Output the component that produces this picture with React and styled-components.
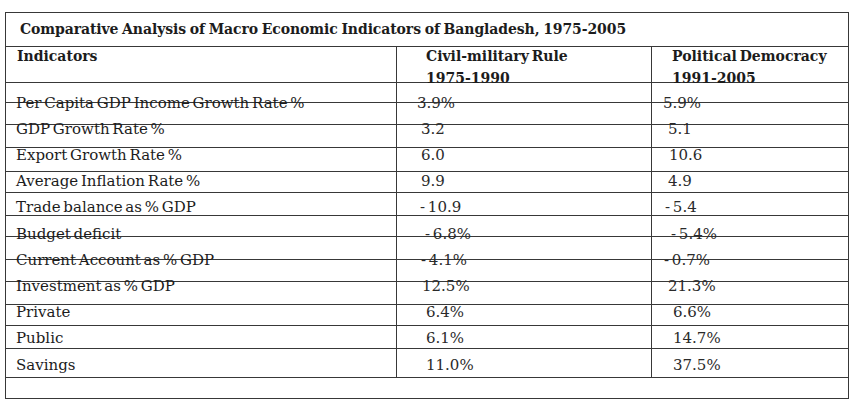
// --------------------------------------------------
//   Import
// --------------------------------------------------

import React from 'react';
import styled, { createGlobalStyle } from 'styled-components';



// --------------------------------------------------
//   Data
// --------------------------------------------------

// line bands of the printed grid (border-box heights, px)
const bandHeights = [20, 22, 23, 24, 21, 23, 21, 23, 22, 23, 21, 23, 29];

const rows = [
  { label: 'Per Capita GDP Income Growth Rate %', a: '3.9%', ai: 20, b: '5.9%', bi: 11 },
  { label: 'GDP Growth Rate %', a: '3.2', ai: 24, b: '5.1', bi: 16 },
  { label: 'Export Growth Rate %', a: '6.0', ai: 24, b: '10.6', bi: 17 },
  { label: 'Average Inflation Rate %', a: '9.9', ai: 24, b: '4.9', bi: 16 },
  { label: 'Trade balance as % GDP', a: '- 10.9', ai: 23, b: '- 5.4', bi: 13 },
  { label: 'Budget deficit', a: '- 6.8%', ai: 28, b: '- 5.4%', bi: 19 },
  { label: 'Current Account as % GDP', a: '- 4.1%', ai: 24, b: '- 0.7%', bi: 12 },
  { label: 'Investment as % GDP', a: '12.5%', ai: 25, b: '21.3%', bi: 16 },
  { label: 'Private', a: '6.4%', ai: 29, b: '6.6%', bi: 21 },
  { label: 'Public', a: '6.1%', ai: 29, b: '14.7%', bi: 21 },
  { label: 'Savings', a: '11.0%', ai: 29, b: '37.5%', bi: 21 },
];



// --------------------------------------------------
//   Styles
// --------------------------------------------------

const GlobalStyle = createGlobalStyle`
  html, body {
    margin: 0;
    padding: 0;
    background: #fff;
  }
`;

const Page = styled.div`
  width: 860px;
  height: 407px;
  padding: 12px 0 0 5px;
  box-sizing: border-box;
  font-family: "DejaVu Serif", serif;
  color: #1c1c1c;
`;

const Sheet = styled.div`
  position: relative;
  width: 844px;
  height: 387px;
  box-sizing: border-box;
  border: 1px solid #383838;
`;

// ---------- printed rules ----------

const Rules = styled.div`
  display: flex;
  flex-direction: column;
`;

const Band = styled.div`
  display: grid;
  grid-template-columns: 391px 255px 1fr;
  height: ${(p) => p.$h}px;
  box-sizing: border-box;
  border-bottom: ${(p) => (p.$last ? 'none' : '1px solid #383838')};
`;

const BandCell = styled.div`
  border-right: ${(p) => (p.$ruled ? '1px solid #383838' : 'none')};
`;

// ---------- text printed over the rules ----------

const TextLayer = styled.div`
  position: absolute;
  inset: 0;
  display: flex;
  flex-direction: column;
`;

const TitleLine = styled.div`
  height: 32px;
  line-height: 32px;
  padding-left: 14px;
  font-size: 14px;
  font-weight: bold;
  letter-spacing: -0.1px;
  word-spacing: -1px;
  white-space: nowrap;
`;

const TextRow = styled.div`
  display: grid;
  grid-template-columns: 391px 255px 1fr;
  height: ${(p) => p.$h}px;
  line-height: ${(p) => p.$h}px;
  font-size: ${(p) => (p.$bold ? 14 : 15)}px;
  font-weight: ${(p) => (p.$bold ? 'bold' : 'normal')};
  word-spacing: -2px;
  white-space: nowrap;
`;

const Cell = styled.div`
  padding-left: ${(p) => p.$indent}px;
`;

const Figure = styled(Cell)`
  font-weight: 300;
  color: #2a2a2a;
`;



// --------------------------------------------------
//   Component
// --------------------------------------------------

export default function App() {
  return (
    <React.Fragment>
      <GlobalStyle />
      <Page>
        <Sheet>
          <Rules>
            <Band $h={34}>
              <BandCell />
            </Band>
            <Band $h={36}>
              <BandCell $ruled />
              <BandCell $ruled />
              <BandCell />
            </Band>
            {bandHeights.map((h, i) => (
              <Band key={i} $h={h}>
                <BandCell $ruled />
                <BandCell $ruled />
                <BandCell />
              </Band>
            ))}
            <Band $h={20} $last />
          </Rules>

          <TextLayer>
            <TitleLine>
              Comparative Analysis of Macro Economic Indicators of Bangladesh, 1975-2005
            </TitleLine>
            <TextRow $h={22.9} $bold>
              <Cell $indent={11}>Indicators</Cell>
              <Cell $indent={29}>Civil-military Rule</Cell>
              <Cell $indent={20}>Political Democracy</Cell>
            </TextRow>
            <TextRow $h={21.8} $bold>
              <Cell />
              <Cell $indent={29}>1975-1990</Cell>
              <Cell $indent={20}>1991-2005</Cell>
            </TextRow>
            {rows.map((r) => (
              <TextRow key={r.label} $h={26.2}>
                <Cell $indent={10}>{r.label}</Cell>
                <Figure $indent={r.ai}>{r.a}</Figure>
                <Figure $indent={r.bi}>{r.b}</Figure>
              </TextRow>
            ))}
          </TextLayer>
        </Sheet>
      </Page>
    </React.Fragment>
  );
}
